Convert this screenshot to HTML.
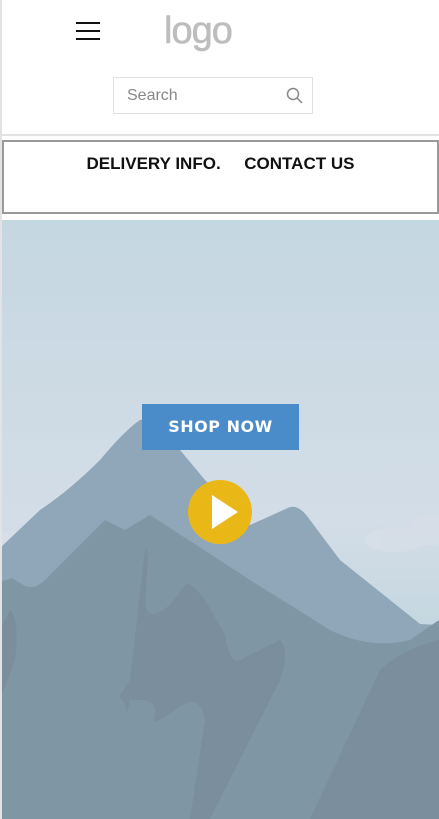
<!DOCTYPE html>
<html><head><meta charset="utf-8"><style>
*{margin:0;padding:0;box-sizing:border-box}
body{width:439px;height:819px;overflow:hidden;background:#fff;font-family:"Liberation Sans",sans-serif;position:relative}
.lb{position:absolute;left:0;top:0;width:2px;height:819px;background:#e3e3e3}
.ham{position:absolute;left:76px;top:22px;width:24px}
.ham i{display:block;height:2px;background:#111;margin-bottom:6px}
.logo{position:absolute;left:164px;top:12px;font-size:38px;line-height:38px;color:#bdbdbd;letter-spacing:-1px;font-family:"Liberation Sans",sans-serif;-webkit-text-stroke:0.6px #bdbdbd}
.search{position:absolute;left:113px;top:77px;width:200px;height:37px;border:1px solid #e0e0e0;font-size:16px;color:#888;padding:9px 13px}
.sep{position:absolute;left:2px;top:134px;width:437px;height:2px;background:#e3e3e3}
.nav{position:absolute;left:2px;top:140px;width:437px;height:74px;border:2px solid #9a9a9a;text-align:center;font-weight:bold;font-size:17px;color:#111;padding-top:12px;letter-spacing:0}
.hero{position:absolute;left:2px;top:220px;width:437px;height:599px;overflow:hidden;background:linear-gradient(#c5d7e1,#d3dde7 50%,#c3d6df 70%)}
.btn{position:absolute;left:142px;top:404px;width:157px;height:46px;background:#4a8bca;color:#fff;font-weight:bold;font-size:16px;letter-spacing:0.5px;text-align:center;line-height:46px;font-family:"DejaVu Sans",sans-serif}
</style></head><body>
<div class="lb"></div>
<div class="ham"><i></i><i></i><i></i></div>
<div class="logo">logo</div>
<div class="search">Search<svg style="position:absolute;right:9px;top:9px" width="17" height="17" viewBox="0 0 17 17"><circle cx="7" cy="7" r="5.5" fill="none" stroke="#888" stroke-width="1.5"/><path d="M11 11l5 5" stroke="#888" stroke-width="1.5"/></svg></div>
<div class="sep"></div>
<div class="nav">DELIVERY INFO.&nbsp;&nbsp;&nbsp;&nbsp; CONTACT US</div>
<div class="hero">
<svg width="437" height="599" viewBox="2 220 437 599" style="position:absolute;left:0;top:0">
<g fill="#d8dee8" opacity="0.7"><ellipse cx="395" cy="540" rx="30" ry="12"/><ellipse cx="430" cy="530" rx="20" ry="16"/><ellipse cx="20" cy="540" rx="25" ry="10"/></g>
<path d="M0 548 L40 510 Q70 490 100 460 Q125 430 140 420 Q160 415 180 450 L205 480 L250 525 L290 507 Q300 505 310 520 L340 560 L420 624 L439 625 V819 H0Z" fill="#8fa7b9"/>
<path d="M0 582 L12 578 L25 586 Q35 590 45 580 L105 520 L125 530 L150 515 L250 580 L330 630 Q370 650 410 640 L439 620 V819 H0Z" fill="#7f96a5"/>
<path d="M0 630 L10 610 Q20 620 15 660 L0 700Z M40 819 L130 680 L145 550 Q150 540 145 600 Q145 625 170 605 L185 585 Q190 580 205 600 L225 635 Q230 665 240 660 L280 640 Q290 650 280 680 L210 819Z M130 700 Q120 740 130 750 L150 730 Q165 700 140 700Z M310 819 L380 670 Q400 650 439 640 V819Z" fill="#7a8e9d"/>
<path d="M0 819 L100 700 Q120 690 125 705 Q135 740 175 710 Q200 690 205 720 L190 819Z" fill="#7f96a5"/>
</svg>
</div>
<div class="btn">SHOP NOW</div>
<svg style="position:absolute;left:188px;top:480px" width="64" height="64" viewBox="0 0 64 64"><circle cx="32" cy="32" r="32" fill="#eab816"/><path d="M24 15 L50 32 L24 49Z" fill="#fff"/></svg>
</body></html>
